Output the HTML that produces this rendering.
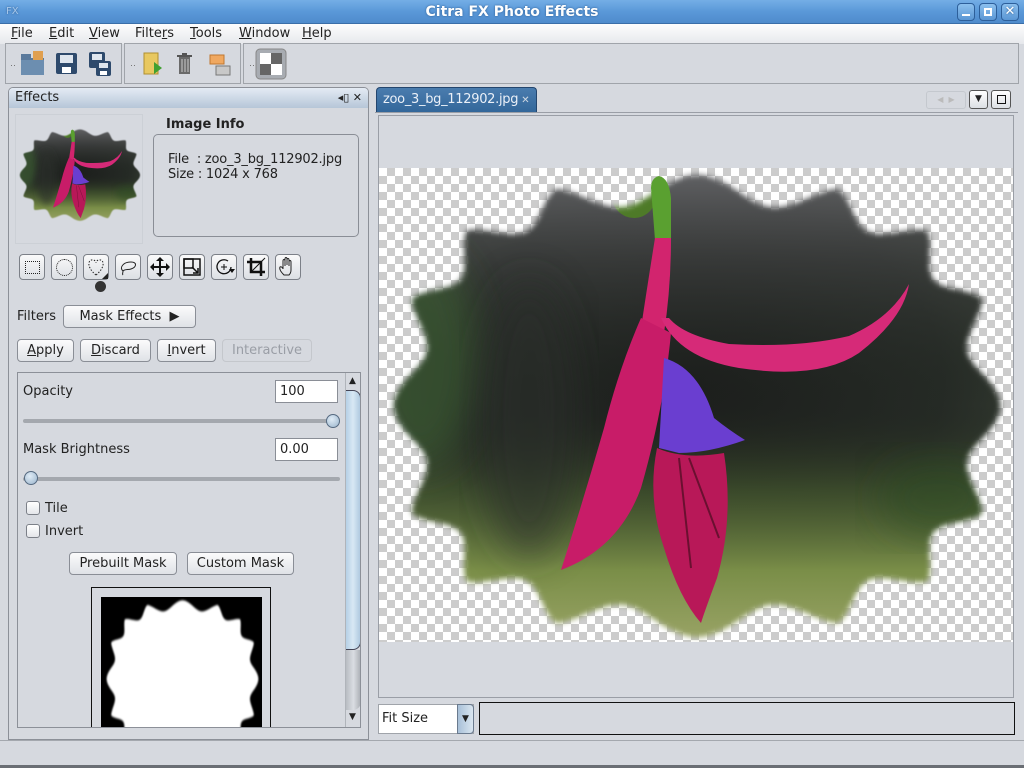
<!DOCTYPE html>
<html><head><meta charset="utf-8">
<style>
*{box-sizing:border-box;margin:0;padding:0}
body{width:1024px;height:768px;overflow:hidden;background:#d6d9df;font-family:"DejaVu Sans","Liberation Sans",sans-serif;font-size:13px;color:#222;position:relative}
.abs{position:absolute}
#title{left:0;top:0;width:1024px;height:24px;background:linear-gradient(#74aee6,#5a98d8 50%,#4f8bcc);border-bottom:1px solid #3a6ea8;color:#fff;text-align:center;font-weight:bold;font-size:14px;line-height:24px;text-shadow:0 0 2px #2a5a90}
.wb{position:absolute;top:3px;width:18px;height:18px;border:1px solid #2d5f9a;border-radius:4px;background:linear-gradient(#8cc0ee,#5a96d4)}
#menu{left:0;top:24px;width:1024px;height:20px;background:linear-gradient(#fdfdfd,#e6e8ec)}
#menu span{position:absolute;top:2px}
.tb{top:43px;height:41px;border:1px solid #a0a4aa;background:#d6d9df}
.btn{position:absolute;height:23px;border:1px solid #8a8e96;border-radius:4px;background:linear-gradient(#fbfbfc,#dfe2e7);text-align:center;line-height:21px}
.tool{position:absolute;top:254px;width:26px;height:26px;border:1px solid #7c8088;border-radius:4px;background:linear-gradient(#fafafa,#dcdfe4)}
.field{position:absolute;width:63px;height:23px;border:1px solid #8a8e96;background:#fff;padding-left:4px;line-height:21px}
.cb{position:absolute;width:14px;height:14px;border:1px solid #7c8088;border-radius:3px;background:linear-gradient(#fff,#e4e6ea)}
.checker{background-color:#fff;background-image:conic-gradient(#ccc 25%,#fff 0 50%,#ccc 0 75%,#fff 0);background-size:16px 16px}
</style></head><body>
<svg width="0" height="0" style="position:absolute">
<defs>
<filter id="bl" x="-5%" y="-5%" width="110%" height="110%"><feGaussianBlur stdDeviation="3"/></filter>
<filter id="bl2" x="-20%" y="-20%" width="140%" height="140%"><feGaussianBlur stdDeviation="18"/></filter>
<mask id="mk" maskUnits="userSpaceOnUse" x="0" y="0" width="633" height="474"><path id="wp" d="" fill="#fff" filter="url(#bl)"/></mask>
<radialGradient id="bg" cx="0.5" cy="0.45" r="0.65">
<stop offset="0" stop-color="#1c1e1c"/><stop offset="0.6" stop-color="#252a25"/><stop offset="1" stop-color="#3c4538"/></radialGradient>
<linearGradient id="bgv" x1="0" y1="0" x2="0" y2="1">
<stop offset="0" stop-color="#6a6a6e" stop-opacity=".9"/><stop offset=".2" stop-color="#4a4a4c" stop-opacity=".5"/><stop offset=".5" stop-color="#1e241e" stop-opacity="0"/><stop offset=".68" stop-color="#4a6030" stop-opacity=".6"/><stop offset=".85" stop-color="#7a8e48"/><stop offset="1" stop-color="#9aa466"/></linearGradient>
<g id="photo">
<g mask="url(#mk)">
<rect x="0" y="0" width="633" height="474" fill="url(#bg)"/>
<rect x="0" y="0" width="633" height="474" fill="url(#bgv)"/>
<ellipse cx="40" cy="190" rx="60" ry="110" fill="#3a5a30" opacity=".7" filter="url(#bl2)"/>
<ellipse cx="150" cy="250" rx="50" ry="140" fill="#2a2e2a" opacity=".6" filter="url(#bl2)"/>
<ellipse cx="560" cy="330" rx="60" ry="40" fill="#2a4a22" opacity=".5" filter="url(#bl2)"/>
<ellipse cx="255" cy="28" rx="22" ry="22" fill="#4e7a28"/>
</g>
<path d="M272 20 Q272 10 280 8 Q290 10 292 30 L292 70 L276 72 Z" fill="#5aa030"/>
<path d="M276 70 Q268 120 262 160 L285 165 Q292 120 292 70 Z" fill="#d2246e"/>
<path d="M262 150 Q240 200 225 260 Q205 330 182 402 Q240 380 262 320 Q285 240 292 165 Z" fill="#c81c68"/>
<path d="M282 150 Q300 190 360 200 Q440 212 480 185 Q525 150 530 116 Q512 150 470 168 Q420 180 350 176 Q305 168 290 150 Z" fill="#d62a78"/>
<path d="M285 190 Q320 200 335 250 Q350 262 366 272 Q330 285 300 285 L280 280 Z" fill="#6a3ed0"/>
<path d="M278 280 Q305 292 345 285 Q355 350 338 410 Q325 445 322 455 Q300 430 285 380 Q268 330 278 280 Z" fill="#b81858"/>
<path d="M300 290 L312 400" stroke="#6a1030" stroke-width="2"/>
<path d="M310 290 L340 370" stroke="#6a1030" stroke-width="2"/>
</g>
</defs></svg>

<div id="title" class="abs">Citra FX Photo Effects
<span class="abs" style="left:6px;top:0;font-size:10px;color:#a8c8ea;font-weight:normal">FX</span>
<div class="wb" style="left:957px"><div style="position:absolute;left:4px;top:10px;width:8px;height:2px;background:#fff"></div></div>
<div class="wb" style="left:979px"><div style="position:absolute;left:4px;top:4px;width:8px;height:8px;border:2px solid #fff"></div></div>
<div class="wb" style="left:1001px;color:#fff;font-size:13px;line-height:16px">✕</div>
</div>
<div id="menu" class="abs">
<span style="left:11px"><u>F</u>ile</span><span style="left:49px"><u>E</u>dit</span><span style="left:89px"><u>V</u>iew</span><span style="left:135px">Filte<u>r</u>s</span><span style="left:190px"><u>T</u>ools</span><span style="left:239px"><u>W</u>indow</span><span style="left:302px"><u>H</u>elp</span>
</div>
<div class="abs tb" style="left:5px;width:117px"></div>
<div class="abs tb" style="left:124px;width:117px"></div>
<div class="abs tb" style="left:243px;width:776px"></div>
<svg class="abs" style="left:0;top:44px" width="300" height="40">
<g fill="#777"><rect x="11" y="21" width="1" height="1"/><rect x="14" y="21" width="1" height="1"/><rect x="131" y="21" width="1" height="1"/><rect x="134" y="21" width="1" height="1"/><rect x="250" y="21" width="1" height="1"/><rect x="253" y="21" width="1" height="1"/></g>
<path d="M21 10h10v4h13v17H21z" fill="#5a7a9c"/><rect x="33" y="7" width="10" height="9" fill="#e0a050"/><path d="M21 16h23v15H21z" fill="#6c8eb0"/>
<rect x="56" y="9" width="21" height="21" rx="2" fill="#2e4a6c"/><rect x="60" y="11" width="13" height="8" fill="#dfe6ee"/><rect x="62" y="23" width="9" height="6" fill="#fff"/>
<rect x="89" y="8" width="16" height="16" rx="2" fill="#2e4a6c"/><rect x="92" y="10" width="10" height="6" fill="#dfe6ee"/><rect x="96" y="17" width="15" height="15" rx="2" fill="#2e4a6c"/><rect x="99" y="19" width="9" height="5" fill="#dfe6ee"/><rect x="100" y="27" width="7" height="4" fill="#fff"/>
<rect x="144" y="9" width="14" height="21" fill="#e8c860" stroke="#b09030"/><path d="M154 18l8 6-8 6z" fill="#40a030"/>
<rect x="179" y="13" width="11" height="17" fill="#6a6a6a"/><rect x="177" y="11" width="15" height="2" fill="#555"/><rect x="182" y="9" width="5" height="2" fill="#555"/><g stroke="#ccc"><path d="M182 15v13M185 15v13M188 15v13"/></g>
<rect x="210" y="11" width="14" height="9" fill="#f0a860" stroke="#c07830"/><rect x="216" y="22" width="14" height="9" fill="#c8c8c8" stroke="#777"/>
<rect x="256" y="5" width="30" height="30" rx="4" fill="#a8acb2" stroke="#888"/><rect x="260" y="9" width="11" height="11" fill="#fff"/><rect x="271" y="9" width="11" height="11" fill="#666"/><rect x="260" y="20" width="11" height="11" fill="#666"/><rect x="271" y="20" width="11" height="11" fill="#fff"/>
</svg>

<!-- left panel -->
<div class="abs" style="left:8px;top:87px;width:361px;height:653px;border:1px solid #8c9098;border-radius:5px 5px 0 0"></div>
<div class="abs" style="left:9px;top:88px;width:359px;height:20px;background:linear-gradient(#e4ebf4,#b6c6d8);border-radius:4px 4px 0 0;padding-left:6px;line-height:20px">Effects<span class="abs" style="right:6px;top:0;font-size:11px">◂▯ ✕</span></div>
<div class="abs" style="left:15px;top:114px;width:128px;height:130px;border:1px solid #ccd0d6"></div>
<svg class="abs" style="left:17px;top:128px" width="126" height="98"><g transform="scale(0.198)"><use href="#photo"/></g></svg>
<div class="abs" style="left:166px;top:117px;font-weight:bold">Image Info</div>
<div class="abs" style="left:153px;top:134px;width:206px;height:103px;border:1px solid #8a8e96;border-radius:5px"></div>
<div class="abs" style="left:168px;top:152px;line-height:15px;letter-spacing:-0.2px">File &nbsp;: zoo_3_bg_112902.jpg<br>Size : 1024 x 768</div>

<div class="tool" style="left:19px"><div class="abs" style="left:5px;top:6px;width:15px;height:13px;border:1px dotted #222"></div></div>
<div class="tool" style="left:51px"><div class="abs" style="left:4px;top:4px;width:17px;height:17px;border:1px dotted #222;border-radius:50%"></div></div>
<div class="tool" style="left:83px"><svg width="24" height="24"><path d="M12 20C2 12 4 4 9 5c2 0 3 2 3 3 0-1 1-3 3-3 5-1 7 7-3 15z" fill="none" stroke="#222" stroke-dasharray="1.5 1.5"/><path d="M24 18v6h-6z" fill="#222"/></svg></div>
<div class="abs" style="left:95px;top:281px;width:11px;height:11px;border-radius:50%;background:#333"></div>
<div class="tool" style="left:115px"><svg width="24" height="24"><path d="M7 16c-4-3 0-9 8-9 6 0 6 5 0 7-3 1-6 0-8 2 0 2-1 3 0 4" fill="none" stroke="#222"/></svg></div>
<div class="tool" style="left:147px"><svg width="24" height="24"><path d="M12 3v18M3 12h18" stroke="#111" stroke-width="2"/><path d="M12 2l-4 4h8zM12 22l-4-4h8zM2 12l4-4v8zM22 12l-4-4v8z" fill="#111"/></svg></div>
<div class="tool" style="left:179px"><svg width="24" height="24"><rect x="4" y="4" width="16" height="16" fill="none" stroke="#111" stroke-width="1.5"/><rect x="4" y="4" width="9" height="9" fill="none" stroke="#111" stroke-width="1.5"/><path d="M12 12l6 6M18 13v5h-5" stroke="#111" fill="none" stroke-width="1.5"/></svg></div>
<div class="tool" style="left:211px"><svg width="24" height="24"><path d="M19 12a7 7 0 1 1-3-6" fill="none" stroke="#111" stroke-width="1.3"/><path d="M9 12h6M12 9v6" stroke="#111"/><path d="M17 14l3 4 3-4z" fill="#111"/></svg></div>
<div class="tool" style="left:243px"><svg width="24" height="24"><path d="M7 3v14h14M3 7h14v14" fill="none" stroke="#111" stroke-width="2.5"/><path d="M21 3L7 17" stroke="#111"/></svg></div>
<div class="tool" style="left:275px"><svg width="24" height="24"><path d="M8 20c-3-3-5-6-4-8 1-1 3 1 3 2V6c0-2 2-2 2 0v5V4c0-2 2-2 2 0v6V5c0-2 2-2 2 0v6V7c0-2 2-2 2 0v8c0 3-1 4-2 5z" fill="none" stroke="#222"/></svg></div>

<div class="abs" style="left:17px;top:309px">Filters</div>
<div class="btn" style="left:63px;top:305px;width:133px">Mask Effects &nbsp;▶</div>
<div class="btn" style="left:17px;top:339px;width:57px"><u>A</u>pply</div>
<div class="btn" style="left:80px;top:339px;width:71px"><u>D</u>iscard</div>
<div class="btn" style="left:157px;top:339px;width:59px"><u>I</u>nvert</div>
<div class="btn" style="left:222px;top:339px;width:90px;color:#9a9ea6;border-color:#c4c7cc;background:#d6d9df">Interactive</div>

<div class="abs" style="left:17px;top:372px;width:344px;height:356px;border:1px solid #8c9098;overflow:hidden">
<div class="abs" style="left:5px;top:11px">Opacity</div>
<div class="field" style="left:257px;top:7px">100</div>
<div class="abs" style="left:5px;top:46px;width:314px;height:4px;border-radius:2px;background:#a4a8ae"></div>
<div class="abs" style="left:308px;top:41px;width:14px;height:14px;border-radius:50%;border:1px solid #566a80;background:radial-gradient(circle at 40% 35%,#e0ecf6,#9ab4cc)"></div>
<div class="abs" style="left:5px;top:69px">Mask Brightness</div>
<div class="field" style="left:257px;top:65px">0.00</div>
<div class="abs" style="left:5px;top:104px;width:317px;height:4px;border-radius:2px;background:#a4a8ae"></div>
<div class="abs" style="left:6px;top:98px;width:14px;height:14px;border-radius:50%;border:1px solid #566a80;background:radial-gradient(circle at 40% 35%,#e0ecf6,#9ab4cc)"></div>
<div class="cb" style="left:8px;top:128px"></div><div class="abs" style="left:27px;top:128px">Tile</div>
<div class="cb" style="left:8px;top:151px"></div><div class="abs" style="left:27px;top:151px">Invert</div>
<div class="btn" style="left:51px;top:179px;width:108px">Prebuilt Mask</div>
<div class="btn" style="left:169px;top:179px;width:107px">Custom Mask</div>
<div class="abs" style="left:73px;top:214px;width:180px;height:160px;border:1px solid #111"></div>
<svg class="abs" style="left:83px;top:224px" width="161" height="140"><rect width="161" height="140" fill="#000"/><g transform="translate(2,1) scale(0.25,0.34)"><use href="#wp" fill="#fff"/></g></svg>
<!-- scrollbar -->
<div class="abs" style="left:327px;top:0;width:16px;height:354px;border-left:1px solid #b0b4ba;background:#d6d9df"></div>
<div class="abs" style="left:331px;top:3px;font-size:9px">▲</div>
<div class="abs" style="left:331px;top:339px;font-size:9px">▼</div>
<div class="abs" style="left:328px;top:17px;width:15px;height:260px;border:1px solid #445;border-left:none;border-radius:0 8px 8px 0;background:linear-gradient(90deg,#b6d0e6,#d8e8f4 50%,#b0cae0)"></div>
<div class="abs" style="left:328px;top:277px;width:15px;height:60px;border-radius:0 0 8px 0;background:linear-gradient(90deg,#b8bcc2,#dadde2 50%,#a8acb2)"></div>
</div>

<!-- right -->
<div class="abs" style="left:376px;top:87px;width:161px;height:25px;border:1px solid #24466e;border-bottom:none;border-radius:4px 4px 0 0;background:linear-gradient(#4a7cae,#33679a);padding-left:6px;line-height:24px;color:#eaf0f8;white-space:nowrap;overflow:hidden;letter-spacing:-0.3px">zoo_3_bg_112902.jpg<span style="font-size:10px;margin-left:3px;color:#cfd8e2">✕</span></div>
<div class="abs" style="left:926px;top:91px;width:40px;height:18px;border:1px solid #c4c8ce;border-radius:3px;color:#bbb;font-size:8px;line-height:16px;text-align:center">◀ &nbsp;▶</div>
<div class="abs" style="left:969px;top:90px;width:19px;height:19px;border:1px solid #555;border-radius:3px;background:linear-gradient(#fff,#dcdfe4);font-size:9px;text-align:center;line-height:17px">▼</div>
<div class="abs" style="left:991px;top:90px;width:20px;height:19px;border:1px solid #555;border-radius:3px;background:linear-gradient(#fff,#dcdfe4)"><div class="abs" style="left:5px;top:4px;width:9px;height:9px;border:1.5px solid #111"></div></div>
<div class="abs" style="left:375px;top:112px;width:643px;height:1px;background:#9a9ea6"></div>
<div class="abs" style="left:378px;top:115px;width:636px;height:583px;border:1px solid #9a9ea6"></div>
<div class="abs checker" style="left:379px;top:168px;width:634px;height:474px"></div>
<svg class="abs" style="left:379px;top:168px" width="634" height="474"><use href="#photo"/></svg>
<div class="abs" style="left:378px;top:704px;width:96px;height:30px;background:#fff;border:1px solid #a0a4aa;padding-left:3px;line-height:28px">Fit Size</div>
<div class="abs" style="left:457px;top:704px;width:17px;height:30px;border:1px solid #6a7a8e;border-radius:0 4px 4px 0;background:linear-gradient(90deg,#a8c0d8,#dae6f0);font-size:9px;text-align:center;line-height:28px">▼</div>
<div class="abs" style="left:479px;top:702px;width:536px;height:33px;border:1px solid #111"></div>
<div class="abs" style="left:0;top:740px;width:1024px;height:1px;background:#a4a8ae"></div>
<div class="abs" style="left:0;top:765px;width:1024px;height:3px;background:#6a6e74"></div>
<script>
(function(){
var cx=318,cy=238,rx=313,ry=236,a=30,n=16,pts=[];
function sp(v){return (v<0?-1:1)*Math.pow(Math.abs(v),0.8);}
for(var i=0;i<=720;i++){var t=i/720*2*Math.PI;
var d=Math.abs(Math.sin(n*(t+Math.PI/2)/2));d=Math.pow(d,1.4);
var x=cx+(rx-a*d)*sp(Math.cos(t))*0.97;var y=cy+(ry-a*d)*sp(Math.sin(t))*0.98;
pts.push((i?'L':'M')+x.toFixed(1)+' '+y.toFixed(1));}
document.getElementById('wp').setAttribute('d',pts.join('')+'Z');
})();
</script>
</body></html>
